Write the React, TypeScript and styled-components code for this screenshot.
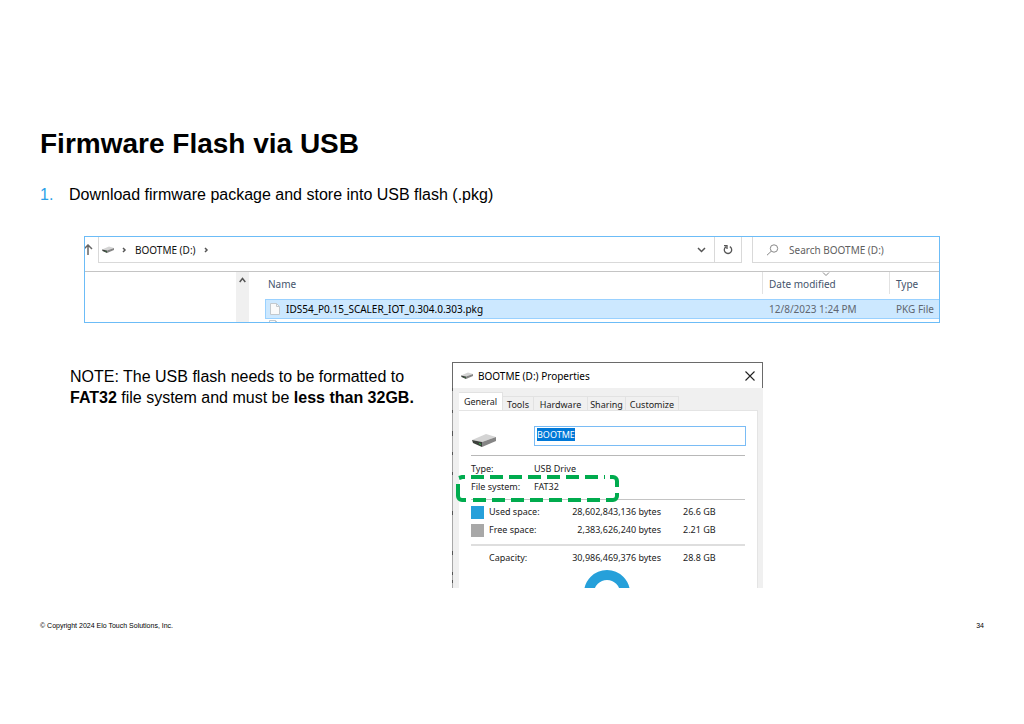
import React, { useEffect, useRef } from "react";
import styled, { createGlobalStyle } from "styled-components";

const GlobalStyle = createGlobalStyle`
  *, *::before, *::after { box-sizing: border-box; }
  body { margin: 0; background: #fff; color: #000; font-family: "Liberation Sans", Arial, sans-serif; }
  h1, h2, p, ol, dl, dd { margin: 0; padding: 0; }
  button, input { font: inherit; color: inherit; margin: 0; padding: 0; border: 0; background: none; }
  svg { display: block; flex: none; }
`;

const Slide = styled.main`
  padding: 124px 40px 40px;
`;

const Title = styled.h1`
  font-size: 28px;
  line-height: 40px;
`;

const Steps = styled.ol`
  list-style: none;
  margin-top: 21px;
`;

const Step = styled.li`
  display: grid;
  grid-template-columns: 29px 1fr;
  font-size: 16px;
  line-height: 20px;
`;

const StepNumber = styled.span`
  color: #2a9fe8;
`;

const Explorer = styled.section`
  height: 87px;
  margin: 31px 44px 0;
  overflow: hidden;
  border: 1px solid #6cbcf7;
  font-family: "Noto Sans", sans-serif;
  font-size: 10px;
  color: #111;
`;

const Toolbar = styled.div`
  display: flex;
  height: 35px;
  padding-bottom: 8px;
  border-bottom: 1px solid #c4c4c4;
`;

const UpButton = styled.button`
  display: flex;
  align-items: center;
  width: 13px;
`;

const AddressBar = styled.nav`
  display: flex;
  flex: 1;
  align-items: center;
  padding-left: 3px;
  border: solid #d9d9d9;
  border-width: 0 0 1px 1px;
`;

const Crumb = styled.button`
  margin: 0 8px;
`;

const CrumbArrow = styled.span`
  &:nth-of-type(1) { margin-left: 8px; }
`;

const DropButton = styled.button`
  margin-left: auto;
  padding: 0 8px;
`;

const RefreshButton = styled.button`
  display: flex;
  align-items: center;
  justify-content: center;
  width: 28px;
  border: solid #d9d9d9;
  border-width: 0 1px 1px;
`;

const SearchBox = styled.label`
  display: flex;
  align-items: center;
  gap: 10px;
  width: 187px;
  margin-left: 10px;
  padding-left: 13px;
  border: solid #d9d9d9;
  border-width: 0 0 1px 1px;

  input { width: 120px; outline: 0; }
  input::placeholder { color: #5f5f5f; opacity: 1; }
`;

const Files = styled.div`
  display: flex;
  height: 51px;
`;

const TreePane = styled.div`
  display: flex;
  justify-content: flex-end;
  width: 164px;
  margin-right: 16px;
`;

const ScrollTrack = styled.div`
  display: flex;
  justify-content: center;
  width: 13px;
  padding-top: 5px;
  background: #f0f0f0;
`;

const FileTable = styled.table`
  flex: 1;
  align-self: flex-start;
  table-layout: fixed;
  border-collapse: separate;
  border-spacing: 0;

  th, td { height: 20px; padding: 0; text-align: left; white-space: nowrap; font-weight: 400; }
  th { position: relative; height: 27px; padding: 0 6px 4px 3px; color: #44546c; }
  td { padding-left: 7px; border: solid #99d1ff; border-width: 1px 0; background: #cce8ff; color: #5f6670; }
  td:first-child { padding-left: 4px; border-left-width: 1px; color: #000; }
  th + th { padding-left: 7px; background: linear-gradient(#e2e2e2, #e2e2e2) left top / 1px 22px no-repeat; }
  th + th + th, td + td + td { padding-left: 7px; }
`;

const DateColumn = styled.col`
  width: 127px;
`;

const TypeColumn = styled.col`
  width: 50px;
`;

const SortMark = styled.svg`
  position: absolute;
  top: 0;
  left: 60px;
`;

const FileName = styled.span`
  display: flex;
  align-items: center;
  gap: 6px;
`;

const NextRow = styled.td`
  && { height: 4px; padding: 1px 0 0 5px; border: 0; background: #fff; vertical-align: top; }
`;

const DetailRow = styled.div`
  display: flex;
  align-items: flex-start;
  margin-top: 39px;
  padding-left: 30px;
`;

const Note = styled.p`
  width: 382px;
  padding: 4px 30px 0 0;
  font-size: 16px;
  line-height: 21px;
`;

const Dialog = styled.section`
  width: 311px;
  height: 226px;
  overflow: hidden;
  background: #f0f0f0;
  color: #222;
  font-family: "Noto Sans", sans-serif;
  font-size: 9px;
  line-height: 18px;
`;

const DialogBar = styled.header`
  display: flex;
  align-items: center;
  height: 26px;
  padding: 0 7px 0 8px;
  border: solid #6a6a6a;
  border-width: 1px 1px 0;
  background: #fff;
`;

const DialogTitle = styled.h2`
  flex: 1;
  margin-left: 5px;
  color: #000;
  font-size: 10px;
  font-weight: 400;
`;

const DialogBody = styled.div`
  display: flex;
`;

const BackdropEdge = styled.svg`
  margin-right: 5px;
`;

const Sheet = styled.div`
  flex: 1;
  margin-right: 5px;
`;

const TabList = styled.div`
  display: flex;
  align-items: flex-end;
  height: 22px;
`;

const Tab = styled.button<{ $selected?: boolean; $width: number }>`
  width: ${(p) => p.$width}px;
  height: ${(p) => (p.$selected ? 18 : 14)}px;
  overflow: hidden;
  border: solid #e2e2e2;
  border-width: 1px 1px 0 0;
  background: ${(p) => (p.$selected ? "#fff" : "#f0f0f0")};
  line-height: 15px;
`;

const Panel = styled.div`
  position: relative;
  height: 178px;
  padding: 15px 12px 0;
  border: 1px solid #e4e4e4;
  border-width: 1px 1px 0 0;
  background: #fff;
`;

const NameRow = styled.div`
  display: grid;
  grid-template-columns: 63px 1fr;
  align-items: start;
  height: 30px;
  border-bottom: 1px solid #b8b8b8;

  > svg { margin: 7px 0 0 1px; }
`;

const NameInput = styled.input`
  width: calc(100% + 1px);
  height: 20px;
  padding: 0 2px 3px;
  border: 1px solid #7abcf5;
  outline: 0;

  &::selection { background: #0078d7; color: #fff; }
`;

const Facts = styled.dl`
  display: grid;
  grid-template-columns: 63px 1fr;
  padding: 4px 0 3px;
  border-bottom: 1px solid #c4c4c4;
`;

const Usage = styled.table`
  width: 100%;
  border-spacing: 0;

  th, td { height: 18px; padding: 0; font-weight: 400; text-align: left; white-space: nowrap; }
  td:nth-of-type(1) { width: 92px; text-align: right; }
  td:nth-of-type(2) { width: 84px; padding-left: 22px; }
  tfoot th, tfoot td { height: 26px; border-top: 2px solid #dedede; }
  tbody tr:first-child > * { padding-top: 3px; height: 21px; }
  tbody tr:last-child > * { padding-bottom: 5px; height: 23px; }
`;

const UsageLabel = styled.span<{ $color?: string }>`
  display: flex;
  align-items: center;
  gap: 5px;

  &::before { content: ""; width: 13px; height: 13px; background: ${(p) => p.$color ?? "none"}; }
`;

const Donut = styled.svg`
  margin-left: 112px;
`;

const Highlight = styled.svg`
  position: absolute;
  top: 62px;
  left: -4px;
`;

const Footer = styled.footer`
  display: flex;
  justify-content: space-between;
  margin-top: 33px;
  font-size: 7px;
  line-height: 9px;
`;

const DriveIcon = ({ size }: { size: number }) => (
  <svg width={size} height={Math.round(size * 0.58)} viewBox="0 0 24 14" aria-hidden="true">
    <path d="M0 7 14 1 24 4 10 9Z" fill="#d4d4d4" />
    <path d="M0 7 10 9V14L1 10Z" fill="#3c413c" />
    <path d="M10 9 24 4V8L10 14Z" fill="#858585" />
    <path d="M7 10 9 11V12L7 11Z" fill="#37b34a" />
  </svg>
);

const PageIcon = () => (
  <svg width="10" height="12" viewBox="0 0 10 12" aria-hidden="true">
    <path d="M.5.5H6.5L9.5 3.5V11.5H.5Z" fill="#fafafa" stroke="#c3c9ce" />
    <path d="M6.5.5V3.5H9.5" fill="none" stroke="#c3c9ce" />
  </svg>
);

const Chevron = ({ d, width, height }: { d: string; width: number; height: number }) => (
  <svg width={width} height={height} fill="none" stroke="#555" strokeWidth="1.5" aria-hidden="true">
    <path d={d} />
  </svg>
);

export default function App() {
  const nameRef = useRef<HTMLInputElement>(null);

  useEffect(() => {
    nameRef.current?.focus({ preventScroll: true });
    nameRef.current?.select();
  }, []);

  return (
    <Slide>
      <GlobalStyle />
      <Title>Firmware Flash via USB</Title>
      <Steps>
        <Step>
          <StepNumber>1.</StepNumber>
          <span>Download firmware package and store into USB flash (.pkg)</span>
        </Step>
      </Steps>

      <Explorer aria-label="File explorer">
        <Toolbar>
          <UpButton aria-label="Up">
            <svg width="8" height="12" fill="none" stroke="#666" strokeWidth="1.5">
              <path d="M3 11V1M-1 5 3 1 7 5" />
            </svg>
          </UpButton>
          <AddressBar aria-label="Address">
            <DriveIcon size={12} />
            <CrumbArrow>
              <Chevron width={5} height={6} d="M1 1 3 3 1 5" />
            </CrumbArrow>
            <Crumb>BOOTME (D:)</Crumb>
            <CrumbArrow>
              <Chevron width={5} height={6} d="M1 1 3 3 1 5" />
            </CrumbArrow>
            <DropButton aria-label="Recent locations">
              <Chevron width={9} height={6} d="M1 1 4.5 4.5 8 1" />
            </DropButton>
          </AddressBar>
          <RefreshButton aria-label="Refresh">
            <svg width="10" height="11" fill="none" stroke="#555" strokeWidth="1.3">
              <path d="M6.8 2.6A3.7 3.7 0 1 1 3 2.7M1 1.7H4V5" />
            </svg>
          </RefreshButton>
          <SearchBox>
            <svg width="13" height="12" fill="none" stroke="#888" aria-hidden="true">
              <circle cx="8" cy="4.5" r="3.7" />
              <path d="M5.3 7.2 1 11.2" />
            </svg>
            <input type="search" aria-label="Search" placeholder="Search BOOTME (D:)" />
          </SearchBox>
        </Toolbar>
        <Files>
          <TreePane>
            <ScrollTrack>
              <Chevron width={7} height={6} d="M.7 5 3.5 1.5 6.3 5" />
            </ScrollTrack>
          </TreePane>
          <FileTable>
            <colgroup>
              <col />
              <DateColumn />
              <TypeColumn />
            </colgroup>
            <thead>
              <tr>
                <th>Name</th>
                <th>
                  Date modified
                  <SortMark width="8" height="5" fill="none" stroke="#888">
                    <path d="M1 .5 4 3.5 7 .5" />
                  </SortMark>
                </th>
                <th>Type</th>
              </tr>
            </thead>
            <tbody>
              <tr>
                <td>
                  <FileName>
                    <PageIcon />
                    IDS54_P0.15_SCALER_IOT_0.304.0.303.pkg
                  </FileName>
                </td>
                <td>12/8/2023 1:24 PM</td>
                <td>PKG File</td>
              </tr>
              <tr>
                <NextRow colSpan={3}>
                  <PageIcon />
                </NextRow>
              </tr>
            </tbody>
          </FileTable>
        </Files>
      </Explorer>

      <DetailRow>
        <Note>
          NOTE: The USB flash needs to be formatted to <b>FAT32</b> file system and must be <b>less than 32GB.</b>
        </Note>
        <Dialog aria-label="BOOTME (D:) Properties">
          <DialogBar>
            <DriveIcon size={12} />
            <DialogTitle>BOOTME (D:) Properties</DialogTitle>
            <button aria-label="Close">
              <svg width="10" height="10" fill="none" stroke="#222" strokeWidth="1.1">
                <path d="M.5.5 9.5 9.5M9.5.5.5 9.5" />
              </svg>
            </button>
          </DialogBar>
          <DialogBody>
            <BackdropEdge width="2" height="200" fill="none" stroke="#555" aria-hidden="true">
              <path d="M.5 0V200" stroke="#a8a8a8" />
              <path d="M.5 0V3M.5 22V25M.5 43V48M.5 64V67M.5 84V87M.5 123V127M.5 163V167M.5 184V187M.5 192V195" />
            </BackdropEdge>
            <Sheet>
              <TabList role="tablist">
                <Tab role="tab" aria-selected="true" $selected $width={44}>General</Tab>
                <Tab role="tab" $width={31}>Tools</Tab>
                <Tab role="tab" $width={54}>Hardware</Tab>
                <Tab role="tab" $width={38}>Sharing</Tab>
                <Tab role="tab" $width={53}>Customize</Tab>
              </TabList>
              <Panel role="tabpanel">
                <NameRow>
                  <DriveIcon size={24} />
                  <NameInput ref={nameRef} aria-label="Volume name" defaultValue="BOOTME" spellCheck={false} />
                </NameRow>
                <Facts>
                  <dt>Type:</dt>
                  <dd>USB Drive</dd>
                  <dt>File system:</dt>
                  <dd>FAT32</dd>
                </Facts>
                <Usage>
                  <tbody>
                    <tr>
                      <th scope="row"><UsageLabel $color="#26a0da">Used space:</UsageLabel></th>
                      <td>28,602,843,136 bytes</td>
                      <td>26.6 GB</td>
                    </tr>
                    <tr>
                      <th scope="row"><UsageLabel $color="#a8a8a8">Free space:</UsageLabel></th>
                      <td>2,383,626,240 bytes</td>
                      <td>2.21 GB</td>
                    </tr>
                  </tbody>
                  <tfoot>
                    <tr>
                      <th scope="row"><UsageLabel>Capacity:</UsageLabel></th>
                      <td>30,986,469,376 bytes</td>
                      <td>28.8 GB</td>
                    </tr>
                  </tfoot>
                </Usage>
                <Donut width="48" height="20" aria-hidden="true">
                  <circle cx="24" cy="23" r="18" fill="none" stroke="#26a0da" strokeWidth="10" />
                </Donut>
                <Highlight width="168" height="32" fill="none" stroke="#00ab4e" strokeWidth="4" aria-hidden="true">
                  <path d="M3 11V23A4 4 0 0 0 7 27H11" />
                  <path d="M18 27H152" strokeDasharray="13 6" />
                  <path d="M152 27H158A4 4 0 0 0 162 23V20" />
                  <path d="M162 14V8A4 4 0 0 0 158 4H155" />
                  <path d="M4 5 7 4H10M16 4H150" strokeDasharray="13 6" />
                </Highlight>
              </Panel>
            </Sheet>
          </DialogBody>
        </Dialog>
      </DetailRow>

      <Footer>
        <span>© Copyright 2024 Elo Touch Solutions, Inc.</span>
        <span>34</span>
      </Footer>
    </Slide>
  );
}
